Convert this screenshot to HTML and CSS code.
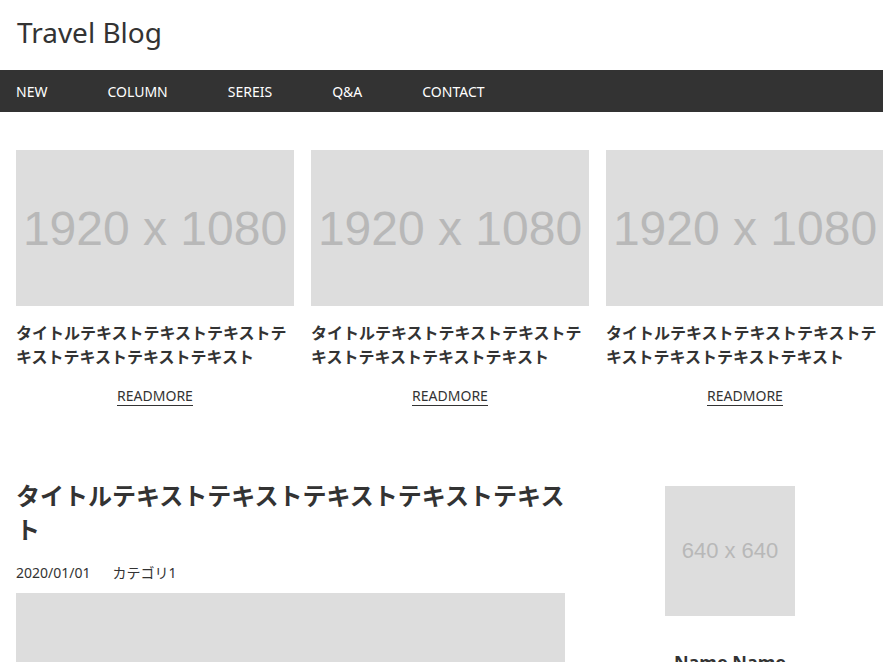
FILE: index.html
```html
<!DOCTYPE html>
<html lang="ja">
<head>
<meta charset="utf-8">
<title>Travel Blog</title>
<link rel="stylesheet" href="styles.css">
</head>
<body>
<header class="site-header">
  <h1 class="logo">Travel Blog</h1>
</header>
<nav class="gnav">
  <ul class="gnav-list">
    <li><a href="#">NEW</a></li>
    <li><a href="#">COLUMN</a></li>
    <li><a href="#">SEREIS</a></li>
    <li><a href="#">Q&amp;A</a></li>
    <li><a href="#">CONTACT</a></li>
  </ul>
</nav>
<section class="pickup">
  <article class="card">
    <div class="ph ph-wide"><span>1920 x 1080</span></div>
    <h2 class="card-title">タイトルテキストテキストテキストテキストテキストテキストテキスト</h2>
    <div class="card-more"><a href="#" class="readmore">READMORE</a></div>
  </article>
  <article class="card">
    <div class="ph ph-wide"><span>1920 x 1080</span></div>
    <h2 class="card-title">タイトルテキストテキストテキストテキストテキストテキストテキスト</h2>
    <div class="card-more"><a href="#" class="readmore">READMORE</a></div>
  </article>
  <article class="card">
    <div class="ph ph-wide"><span>1920 x 1080</span></div>
    <h2 class="card-title">タイトルテキストテキストテキストテキストテキストテキストテキスト</h2>
    <div class="card-more"><a href="#" class="readmore">READMORE</a></div>
  </article>
</section>
<div class="layout">
  <main class="main">
    <h2 class="post-title">タイトルテキストテキストテキストテキストテキスト</h2>
    <div class="post-meta"><span>2020/01/01</span><span>カテゴリ1</span></div>
    <div class="ph post-image"></div>
  </main>
  <aside class="side">
    <div class="ph ph-square"><span>640 x 640</span></div>
    <p class="profile-name">Name Name</p>
  </aside>
</div>
</body>
</html>
```
FILE: styles.css
```css
html, body {
  margin: 0;
  padding: 0;
  overflow: hidden;
}
body {
  width: 883px;
  height: 662px;
  font-family: "Noto Sans", "Noto Sans CJK JP", sans-serif;
  color: #333;
  background: #fff;
}
a { color: inherit; text-decoration: none; }

.site-header {
  height: 70px;
  padding-left: 17px;
  display: flex;
  align-items: center;
}
.logo {
  margin: 0;
  font-size: 28px;
  font-weight: 400;
  line-height: 1;
  color: #333;
  position: relative;
  top: -3px;
}

.gnav {
  background: #333;
  height: 42px;
}
.gnav-list {
  list-style: none;
  margin: 0;
  padding: 0 0 0 16px;
  display: flex;
  align-items: center;
  height: 100%;
  gap: 60px;
}
.gnav-list a {
  color: #fff;
  font-size: 14px;
  line-height: 1;
}

.pickup {
  display: flex;
  gap: 17px;
  padding: 38px 0 0 16px;
  width: 900px;
}
.card {
  flex: 0 0 278px;
  width: 278px;
}
.ph {
  background: #dddddd;
  display: flex;
  align-items: center;
  justify-content: center;
  color: #b8b8b8;
  font-family: "Liberation Sans", Arial, sans-serif;
}
.ph-wide {
  height: 156px;
  font-size: 48px;
}
.card-title {
  margin: 15px 0 0;
  font-size: 16px;
  font-weight: 700;
  line-height: 24px;
}
.card-more {
  text-align: center;
  margin-top: 15px;
}
.readmore {
  display: inline-block;
  font-size: 14px;
  line-height: 18px;
  border-bottom: 1px solid #333;
}

.layout {
  display: flex;
  padding: 73px 0 0 16px;
  gap: 27px;
}
.main {
  flex: 0 0 552px;
  width: 552px;
}
.post-title {
  margin: 0;
  font-size: 24px;
  font-weight: 700;
  line-height: 34px;
}
.post-meta {
  margin-top: 15px;
  font-size: 14px;
  line-height: 21px;
  display: flex;
  gap: 22px;
}
.post-image {
  margin-top: 10px;
  width: 549px;
  height: 200px;
}
.side {
  flex: 0 0 270px;
  display: flex;
  flex-direction: column;
  align-items: center;
  padding-top: 7px;
}
.ph-square {
  width: 130px;
  height: 130px;
  font-size: 22px;
}
.profile-name {
  margin: 33px 0 0;
  font-size: 18px;
  font-weight: 700;
  line-height: 26px;
}
```
